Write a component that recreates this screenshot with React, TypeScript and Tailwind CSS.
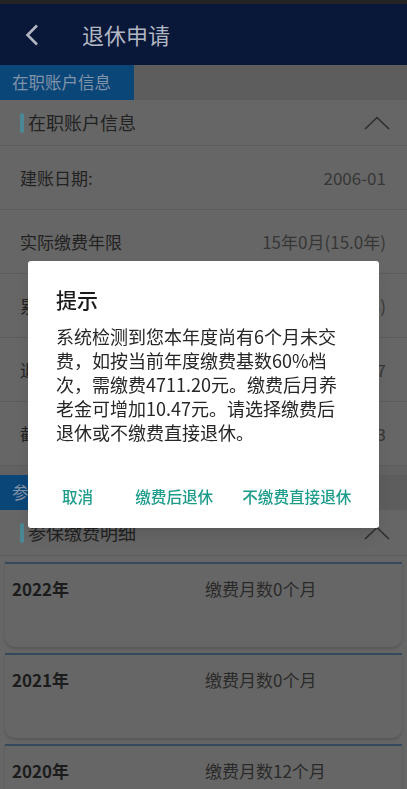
import React from 'react'

const ACCOUNT_ROWS = [
  { label: '建账日期:', value: '2006-01' },
  { label: '实际缴费年限', value: '15年0月(15.0年)' },
  { label: '累计缴费年限', value: '15年0月(15.0年)' },
  { label: '退休时间', value: '2022-07' },
  { label: '截止缴费年月', value: '2022-03' },
]

const PAY_YEARS = [
  { year: '2022年', months: '缴费月数0个月' },
  { year: '2021年', months: '缴费月数0个月' },
  { year: '2020年', months: '缴费月数12个月' },
]

function ChevronUp() {
  return (
    <svg width="26" height="14" viewBox="0 0 26 14" fill="none" className="shrink-0">
      <polyline points="1,13 13,1.5 25,13" stroke="#2e2e2e" strokeWidth="1.6" />
    </svg>
  )
}

function TabBar({ label }: { label: string }) {
  return (
    <div className="flex h-[35px] bg-[#5d5d5d]">
      <div className="flex w-[134px] items-center bg-[#0b4679] pl-[12px] text-[16.5px] text-[#8093a8]">
        {label}
      </div>
    </div>
  )
}

function SectionHeader({ title }: { title: string }) {
  return (
    <div className="flex h-[46px] items-center border-b border-[#5b5b5b] pl-[20px] pr-[17px]">
      <span className="h-[20px] w-[4px] rounded-sm bg-[#4b8794]" />
      <span className="ml-[4px] flex-1 text-[18px] text-[#222]">{title}</span>
      <ChevronUp />
    </div>
  )
}

function RetireDialog() {
  return (
    <div className="fixed inset-0 flex items-center justify-center">
      <div className="w-[351px] rounded-[3px] bg-white pb-[9px] pt-[24px] shadow-lg">
        <h2 className="px-[28px] text-[21px] font-medium leading-[28px] text-[#1a1a1a]">提示</h2>
        <p className="mt-[11px] px-[28px] text-[18px] leading-[24px] text-[#262626]">
          系统检测到您本年度尚有6个月未交费，如按当前年度缴费基数60%档次，需缴费4711.20元。缴费后月养老金可增加10.47元。请选择缴费后退休或不缴费直接退休。
        </p>
        <div className="mt-[31px] flex h-[44px] items-center pl-[34px] text-[15.6px] font-medium text-[#1e9c8b]">
          <button type="button">取消</button>
          <button type="button" className="ml-[42px]">缴费后退休</button>
          <button type="button" className="ml-[29px]">不缴费直接退休</button>
        </div>
      </div>
    </div>
  )
}

export default function App() {
  return (
    <div className="h-[789px] overflow-hidden bg-[#666666] font-['Noto_Sans_CJK_SC','Noto_Sans',sans-serif]">
      <div className="h-[4px] bg-[#242424]" />
      <header className="flex h-[61px] items-center bg-[#091738] pl-[25px]">
        <svg width="14" height="22" viewBox="0 0 14 22" fill="none">
          <polyline points="12,1.5 2.5,11 12,20.5" stroke="#b1b6c2" strokeWidth="2.6" />
        </svg>
        <h1 className="ml-[43px] text-[22px] text-[#b1b6c2]">退休申请</h1>
      </header>

      <TabBar label="在职账户信息" />
      <SectionHeader title="在职账户信息" />
      <div>
        {ACCOUNT_ROWS.map((row) => (
          <div
            key={row.label}
            className="flex h-[64px] items-center justify-between border-b border-[#5b5b5b] pl-[20px] pr-[21px] text-[17px]"
          >
            <span className="text-[#222]">{row.label}</span>
            <span className="text-[#363636]">{row.value}</span>
          </div>
        ))}
      </div>

      <div className="h-[9px] bg-[#626262]" />
      <TabBar label="参保缴费明细" />
      <SectionHeader title="参保缴费明细" />

      <div className="flex flex-col gap-[6px] px-[5px] pt-[6px]">
        {PAY_YEARS.map((item) => (
          <div
            key={item.year}
            className="h-[85px] shrink-0 rounded-b-[10px] border-t-2 border-[#34495c] bg-[#666666] shadow-[0_2px_3px_rgba(0,0,0,0.15)]"
          >
            <div className="flex h-[50px] items-center pl-[7px] text-[17px]">
              <span className="w-[193px] font-bold text-[#1c1c1c]">{item.year}</span>
              <span className="text-[#2a2a2a]">{item.months}</span>
            </div>
          </div>
        ))}
      </div>

      <RetireDialog />
    </div>
  )
}
